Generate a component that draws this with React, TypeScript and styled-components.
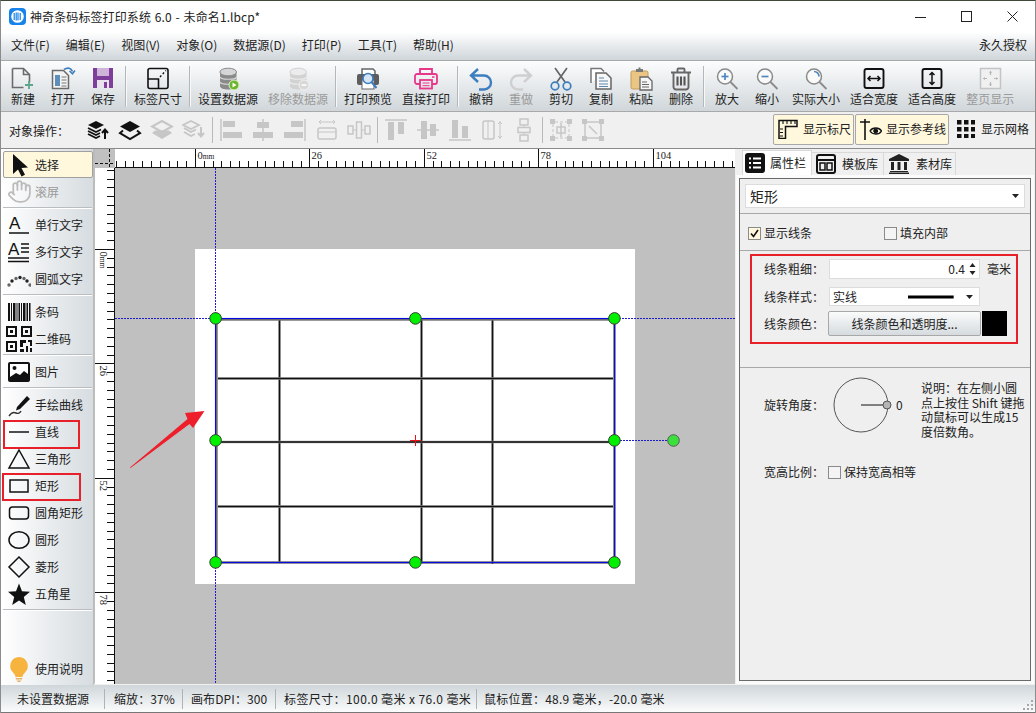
import React from "react";
import styled, { createGlobalStyle } from "styled-components";
import { Hand } from "lucide-react";

const Global = createGlobalStyle`
  html, body { margin: 0; padding: 0; background: #fff; overflow: hidden; }
  * { box-sizing: border-box; }
`;

const FONT = `"Noto Sans CJK SC", "Noto Sans", sans-serif`;
const C = "\uFF1A";
const CM = "\uFF0C";

const Window = styled.div`
  width: 1036px; height: 713px; display: flex; flex-direction: column;
  border-left: 1px solid #8c8c8c; border-right: 1px solid #8c8c8c; border-top: 1px solid #3d4a38;
  font: 12px/16px ${FONT}; color: #222; background: #f0f0f0; overflow: hidden;
`;
const TitleBar = styled.div`height: 31px; flex: none; background: #fff; display: flex; align-items: center; padding-left: 8px;`;
const TitleText = styled.span`margin-left: 4px; flex: 1; letter-spacing: 0.1px; word-spacing: 1px;`;
const WinButton = styled.div`width: 46px; height: 31px; display: flex; align-items: center; justify-content: center;`;
const MenuBar = styled.div`
  height: 29px; flex: none; display: flex; align-items: center; padding: 0 8px 2px 10px; gap: 16.1px;
  background: linear-gradient(#ffffff, #cfd5da); border-bottom: 1px solid #a9a9a9;
`;
const MenuRight = styled.span`margin-left: auto;`;
const ToolBar = styled.div`
  height: 51px; flex: none; display: flex; padding: 3px 0 0 2px;
  background: linear-gradient(#fcfdfd, #d0d6da); border-bottom: 1px solid #a9a9a9;
`;
const ToolButton = styled.div<{ $off?: boolean }>`
  min-width: 40px; padding: 0 5px; height: 46px; display: flex; flex-direction: column; align-items: center;
  color: ${(p) => (p.$off ? "#9a9a9a" : "#222")}; white-space: nowrap;
  svg { display: block; margin-top: 2px; margin-bottom: -3px; }
`;
const ToolSep = styled.div`width: 6px; height: 41px; margin-top: 2px; position: relative; flex: none;
  &::before { content: ""; position: absolute; left: 2px; top: 0; bottom: 0; width: 1px; background: #b4b8bb; }
  &::after { content: ""; position: absolute; left: 3px; top: 0; bottom: 0; width: 1px; background: #f8f8f8; }
`;
const ObjectBar = styled.div`
  height: 37px; flex: none; display: flex; align-items: center; padding: 0 5px 2px 8px;
  background: #f0f0f0; border-bottom: 1px solid #8a8a8a;
`;
const ObjectLabel = styled.span`width: 73px; flex: none; margin-top: 3px;`;
const ObjectIcon = styled.div`width: 32px; height: 26px; flex: none; display: flex; align-items: center; justify-content: center; margin-top: 1px;`;
const ObjectSep = styled.div`width: 5px; height: 26px; flex: none; position: relative; margin-top: 1px;
  &::before { content: ""; position: absolute; left: 2px; top: 0; bottom: 0; width: 1px; background: #b9b9b9; }
`;
const ShowGroup = styled.div`margin-left: auto; display: flex; align-items: center; gap: 1px;`;
const ShowButton = styled.div<{ $on?: boolean; $gap: number }>`
  height: 31px; padding: 0 ${(p) => (p.$on ? "2px" : "0")} 0 ${(p) => (p.$on ? "4px" : "6px")}; display: flex; align-items: center; gap: ${(p) => p.$gap}px; white-space: nowrap;
  background: ${(p) => (p.$on ? "#fff8dd" : "transparent")};
  border: 1px solid ${(p) => (p.$on ? "#a8a8a8" : "transparent")}; border-radius: 2px;
`;
const Main = styled.div`flex: 1; min-height: 0; display: flex;`;
const SideBar = styled.div`
  width: 94px; flex: none; display: flex; flex-direction: column; padding: 2px 0 3px;
  background: linear-gradient(90deg, #ffffff, #d6dce0); border-right: 2px solid #bcbcbc;
  border-bottom-right-radius: 3px;
`;
const SideItem = styled.div<{ $active?: boolean; $off?: boolean; $mark?: "line" | "rect" }>`
  height: 27px; flex: none; display: flex; align-items: center; gap: 3px; padding-left: 5px; position: relative;
  color: ${(p) => (p.$off ? "#9a9a9a" : "#222")}; white-space: nowrap;
  ${(p) => p.$active && `background: #fff8dd; border: 1px solid #a0a0a0; border-radius: 2px; margin: 0 0 0 2px; padding-left: 2px; width: 90px;`}
  ${(p) => p.$mark === "line" && `&::after { content: ""; position: absolute; left: 2px; top: 2px; width: 73px; height: 25px; border: 2px solid #e8202a; }`}
  ${(p) => p.$mark === "rect" && `&::after { content: ""; position: absolute; left: 1px; top: 1px; width: 75px; height: 24px; border: 2px solid #e8202a; }`}
`;
const SideIcon = styled.div`width: 26px; height: 26px; flex: none; display: flex; align-items: center; justify-content: center;`;
const SideSep = styled.div`height: 6px; flex: none; position: relative;
  &::before { content: ""; position: absolute; left: 2px; right: 1px; top: 2px; height: 1px; background: #b9bdc0; }
  &::after { content: ""; position: absolute; left: 2px; right: 1px; top: 3px; height: 1px; background: #fff; }
`;
const SideBottom = styled.div`margin-top: auto;`;
const Workspace = styled.div`
  width: 640px; flex: none; position: relative; display: grid;
  grid-template-columns: 20px 620px; grid-template-rows: 19px 516px;
`;
const RulerCorner = styled.div`background: #c0c0c0;`;
const TopRuler = styled.svg`display: block; background: #fff;`;
const LeftRuler = styled.svg`display: block; background: #fff;`;
const CanvasArea = styled.div`background: #c0c0c0; position: relative;`;
const PageSheet = styled.div`position: absolute; left: 80px; top: 81px; width: 440px; height: 335px; background: #fff;`;
const Overlay = styled.svg`position: absolute; left: 0; top: 0; pointer-events: none;`;
const RightPanel = styled.div`
  flex: 1; min-width: 0; display: flex; flex-direction: column; background: #f0f0f0; position: relative;
`;
const Tabs = styled.div`height: 26px; flex: none; display: flex; padding: 1px 0 0 7px; align-items: flex-end; position: relative; z-index: 1;`;
const Tab = styled.div<{ $active?: boolean }>`
  height: ${(p) => (p.$active ? "25px" : "23px")}; width: ${(p) => (p.$active ? "70px" : "72px")}; display: flex; align-items: center;
  gap: ${(p) => (p.$active ? "4px" : "6px")}; padding-left: 1px; white-space: nowrap;
  background: ${(p) => (p.$active ? "#fff" : "#f0f0f0")};
  border: 1px solid #d9d9d9; border-bottom: none; 
  ${(p) => !p.$active && `margin-left: -1px; padding-left: 4px; width: 73px;`}
`;
const PropBox = styled.div`
  flex: 1; margin: 3px 4px 4px; border: 1px solid #6a6a6a; background: #efefef; display: flex; flex-direction: column;
  box-shadow: 0 0 0 3px #fbfbfb;
`;
const HeadSection = styled.div`padding: 5px 5px 5px 5px; height: 35px; flex: none; border-bottom: 1px solid #a8a8a8;`;
const KindSelect = styled.div`
  height: 24px; background: #fff; border: 1px solid #dcdcdc; display: flex; align-items: center; justify-content: space-between;
  padding: 0 5px 0 4px; font-size: 14px;
`;
const CheckSection = styled.div`height: 37px; flex: none; display: flex; align-items: center; padding: 2px 0 0 8px; border-bottom: 1px solid #a8a8a8;`;
const CheckLabel = styled.label<{ $width?: number }>`display: flex; align-items: center; gap: 3px; width: ${(p) => p.$width ?? 136}px;`;
const CheckBox = styled.span<{ $on?: boolean }>`
  width: 13px; height: 13px; flex: none; border: 1px solid #8a8a8a; display: flex; align-items: center; justify-content: center;
  background: ${(p) => (p.$on ? "#fff8dd" : "#f4f4f4")};
`;
const LineSection = styled.div`height: 117px; flex: none; padding: 3px 0 0 10px; border-bottom: 1px solid #a8a8a8;`;
const RedFrame = styled.div`
  width: 268px; height: 90px; border: 2px solid #e8202a; padding: 3px 0 0 12px; display: flex; flex-direction: column;
`;
const LineRow = styled.div<{ $h: number; $mb: number }>`display: flex; align-items: center; height: ${(p) => p.$h}px; margin-bottom: ${(p) => p.$mb}px;`;
const FieldLabel = styled.span`width: 65px; flex: none; white-space: nowrap;`;
const NumberField = styled.div`
  width: 151px; height: 100%; background: #fff; border: 1px solid #dcdcdc; display: flex; align-items: center; justify-content: flex-end; gap: 4px; padding-right: 3px;
`;
const Unit = styled.span`margin-left: 7px;`;
const StyleField = styled(NumberField)`justify-content: flex-start; padding: 0 6px 0 3px; gap: 0;`;
const StyleName = styled.span`width: 76px;`;
const StyleSpacer = styled.span`width: 12px;`;
const ColorButton = styled.div`
  width: 153px; height: 100%; margin-left: -1px; display: flex; align-items: center; justify-content: center;
  background: linear-gradient(#fbfbfb, #d5dbdf); border: 1px solid #a8a8a8; border-radius: 2px;
`;
const Swatch = styled.div`width: 25px; height: 25px; margin-left: 1px; background: #000;`;
const RotateSection = styled.div`display: flex; align-items: flex-start; padding: 7px 0 0 24px;`;
const DialValue = styled.span`width: 29px; padding-left: 4px; flex: none; margin-top: 22px;`;
const RotateLabel = styled.span`width: 66px; flex: none; margin-top: 22px; white-space: nowrap;`;
const Note = styled.div`line-height: 14.6px; width: 108px; white-space: nowrap; margin-top: 6px;`;
const RatioRow = styled.div`display: flex; align-items: center; padding: 25px 0 0 24px;`;
const RatioLabel = styled.span`width: 64px; flex: none; white-space: nowrap;`;
const StatusBar = styled.div`
  height: 28px; flex: none; display: flex; align-items: center; background: linear-gradient(#cfd6da, #fbfcfc);
  border-bottom: 1px solid #777; position: relative; white-space: nowrap;
`;
const StatusCell = styled.div<{ $w: number; $pad: number; $last?: boolean; $ls?: number }>`
  width: ${(p) => p.$w}px; padding-left: ${(p) => p.$pad}px; height: 20px; line-height: 20px; flex: none;
  letter-spacing: ${(p) => p.$ls ?? 0}px;
  border-right: ${(p) => (p.$last ? "none" : "1px solid #aeb3b6")};
`;
const Grip = styled.svg`position: absolute; right: 1px; bottom: 1px;`;

type P = { c?: string };
const G = ({ children, s = 28 }: { children: React.ReactNode; s?: number }) => (
  <svg width={s} height={s} viewBox={`0 0 ${s} ${s}`} fill="none">{children}</svg>
);

const Logo = () => (
  <svg width="17" height="17" viewBox="0 0 17 17">
    <rect width="17" height="17" rx="4" fill="#1683ea" />
    <circle cx="8.5" cy="8.5" r="6.3" fill="#fff" />
    <path d="M5.2 5v7M7.2 4.5v8M9 4.5v8M11.2 5v7" stroke="#1683ea" strokeWidth="1.2" />
  </svg>
);

const INew = () => (
  <G>
    <path d="M3.5 2.5h11l6 6v8M14.5 2.5v6h6M3.5 2.5v19h11" stroke="#6b6b6b" strokeWidth="1.6" />
    <path d="M20 15v8M16 19h8" stroke="#5fa58c" strokeWidth="1.8" />
  </G>
);
const IOpen = () => (
  <G>
    <path d="M3.5 4.5h11l5 5v13h-16z" fill="#f3f3f3" stroke="#6b6b6b" strokeWidth="1.5" />
    <path d="M6 9h5v11H6z" fill="#5d8fbd" />
    <path d="M12.5 11h5M12.5 14h5M12.5 17h5M12.5 20h5" stroke="#777" />
    <path d="M15 3.5c4-2.5 7-1.500 8.500 2" stroke="#3d7ebf" strokeWidth="1.7" />
    <path d="M20.500 5l3 2.800 2.500-3.300" stroke="#3d7ebf" strokeWidth="1.500" />
  </G>
);
const ISave = () => (
  <G>
    <path d="M4 2h20v20H4z" fill="#7d3f9a" />
    <path d="M8 2h12v8H8z" fill="#cdb4d8" />
    <path d="M8 14h12v8H8z" fill="#e9e1ee" />
    <path d="M15 16h3v6h-3z" fill="#7d3f9a" />
  </G>
);
const ISize = () => (
  <G>
    <rect x="4" y="2.500" width="20" height="20" rx="2" stroke="#111" strokeWidth="1.600" />
    <path d="M4 13h10.500v9" stroke="#111" strokeWidth="1.600" />
    <path d="M16 11l6-6.500" stroke="#111" strokeWidth="1.400" strokeDasharray="2 2" />
  </G>
);
const IDb = ({ off }: { off?: boolean }) => {
  const a = off ? "#d2d2d2" : "#8a8a8a";
  const b = off ? "#ececec" : "#d6d6d6";
  return (
    <G>
      <path d="M6 6v14c0 2.500 4 3.500 8 3.500s8.500-1 8.500-3.500V6z" fill={a} />
      <ellipse cx="14.200" cy="6" rx="8.300" ry="3.800" fill={b} stroke={a} />
      <path d="M6 11c1 3 15.500 3 16.500 0M6 16c1 3 15.500 3 16.500 0" stroke={b} strokeWidth="1.200" />
      <circle cx="20" cy="19" r="5" fill={off ? "#d8d8d8" : "#6bb52f"} stroke={off ? "#f2f2f2" : "#dff0c8"} />
      {off ? <path d="M17.500 19h5" stroke="#fff" strokeWidth="1.600" /> : <path d="M18.500 16.500v5l4-2.500z" fill="#fff" />}
    </G>
  );
};
const IPreview = () => (
  <G>
    <path d="M8 8V3h11l2 2v3" fill="#fff" stroke="#666" strokeWidth="1.500" />
    <rect x="3" y="8" width="22" height="11" rx="2" fill="#5d5d5d" />
    <rect x="8" y="14" width="12" height="9" fill="#fff" stroke="#666" />
    <circle cx="14" cy="12.500" r="5" fill="#d4e6f6" stroke="#3b7bbf" strokeWidth="1.500" />
    <path d="M17.500 16l5 6" stroke="#3b7bbf" strokeWidth="2" />
  </G>
);
const IPrint = () => (
  <G>
    <path d="M8 8V3h12v5" stroke="#e8368a" strokeWidth="1.800" />
    <path d="M8 18H5a2 2 0 0 1-2-2V10a2 2 0 0 1 2-2h18a2 2 0 0 1 2 2v6a2 2 0 0 1-2 2h-3" stroke="#e8368a" strokeWidth="1.800" />
    <rect x="8" y="14" width="12" height="8.500" stroke="#e8368a" strokeWidth="1.800" />
    <path d="M10.500 17h7M10.500 19.700h7" stroke="#e8368a" />
    <path d="M20 11h2.500" stroke="#e8368a" strokeWidth="1.500" />
  </G>
);
const IUndo = ({ c = "#3d7ebf", flip }: P & { flip?: boolean }) => (
  <G>
    <g transform={flip ? "matrix(-1 0 0 1 28 0)" : undefined}>
      <path d="M11 3L4 9.500l7 6.500M4.500 9.500H17a7 7 0 0 1 0 14h-5" stroke={c} strokeWidth="2.400" />
    </g>
  </G>
);
const ICut = () => (
  <G>
    <path d="M10 16L20 2M18 16L8 2" stroke="#666" strokeWidth="1.700" />
    <circle cx="8" cy="20" r="3.800" stroke="#3d7ebf" strokeWidth="1.700" />
    <circle cx="20" cy="20" r="3.800" stroke="#3d7ebf" strokeWidth="1.700" />
  </G>
);
const ICopy = () => (
  <G>
    <path d="M4 17V2.500h10l3 3" fill="#fff" stroke="#777" strokeWidth="1.500" />
    <path d="M9 7h10l5 5v11H9z" fill="#f7f7f7" stroke="#666" strokeWidth="1.500" />
    <path d="M12 12h5M12 15h9M12 18h9M12 20.500h9" stroke="#5a86ad" />
  </G>
);
const IPaste = () => (
  <G>
    <rect x="4" y="5" width="17" height="18" rx="1.500" fill="#eac583" stroke="#c59b5a" />
    <path d="M9 6V3h2.500V1.500h2V3H16v3z" fill="#777" />
    <path d="M13 11h8l4 4v9H13z" fill="#f6f6f6" stroke="#666" strokeWidth="1.300" />
    <path d="M15 16h5M15 18.500h7M15 21h7" stroke="#666" />
  </G>
);
const ITrash = () => (
  <G>
    <path d="M4 6.500h20M10.500 6V3.500a1 1 0 0 1 1-1h5a1 1 0 0 1 1 1V6" stroke="#666" strokeWidth="1.900" />
    <path d="M6.500 7v14a2.500 2.500 0 0 0 2.500 2.500h10a2.500 2.500 0 0 0 2.500-2.500V7" stroke="#666" strokeWidth="1.900" />
    <path d="M10.500 10.500v9M14 10.500v9M17.500 10.500v9" stroke="#555" strokeWidth="2.100" />
  </G>
);
const IZoom = ({ kind }: { kind: "in" | "out" | "fit" }) => (
  <G>
    <circle cx="12" cy="10.500" r="7.500" fill="#fafafa" stroke="#8a8a8a" strokeWidth="1.500" />
    <path d="M17.500 16l7 7" stroke="#8a8a8a" strokeWidth="1.800" />
    {kind !== "fit" && <path d="M8.500 10.500h7" stroke="#4f87bc" strokeWidth="1.700" />}
    {kind === "in" && <path d="M12 7v7" stroke="#4f87bc" strokeWidth="1.700" />}
    {kind === "fit" && <path d="M12 5.500a5 5 0 0 1 5 5" stroke="#4f87bc" strokeWidth="1.700" />}
  </G>
);
const IFit = ({ v }: { v?: boolean }) => (
  <G>
    <rect x="4.500" y="3" width="19" height="19" rx="2" stroke="#111" strokeWidth="1.900" />
    <g transform={v ? "rotate(90 14 12.500)" : undefined}>
      <path d="M8 12.500h12M10.500 10L8 12.500l2.500 2.500M17.500 10l2.500 2.500-2.500 2.500" stroke="#111" strokeWidth="1.500" />
    </g>
  </G>
);
const IFull = () => (
  <G>
    <rect x="4.500" y="2.500" width="20" height="20" fill="#f0f0f0" stroke="#c4c4c4" strokeWidth="1.500" />
    <path d="M14.500 5v4M14.500 16v4M7 12.500h4M18 12.500h4" stroke="#b6b6b6" strokeWidth="1.200" />
    <path d="M13 7l1.500-2 1.500 2M13 18l1.500 2 1.500-2M9 11l-2 1.500 2 1.500M20 11l2 1.500-2 1.500" fill="#b6b6b6" />
  </G>
);

const Off = "#c6c6c6";
const OLayer = ({ kind }: { kind: number }) => (
  <G s={24}>
    {kind === 0 && (
      <>
        <path d="M10 3l8 4-8 4-8-4z" fill="#111" />
        <path d="M2 10l8 4 5-2.500M2 13l8 4 4-2M2 16l8 4 4-2" stroke="#111" strokeWidth="1.700" />
        <path d="M19 21v-9M16 15l3-3.500 3 3.500" stroke="#111" strokeWidth="2" />
      </>
    )}
    {kind === 1 && (
      <>
        <path d="M12 3l10 5.500-10 5.500L2 8.500z" fill="#111" />
        <path d="M5 12.500l-3 2.500 10 6 10-6-3-2.500" stroke="#111" strokeWidth="2" />
      </>
    )}
    {kind === 2 && (
      <>
        <path d="M12 3l10 5.500-10 5.500L2 8.500z" stroke={Off} strokeWidth="2" />
        <path d="M5 12.500l-3 2.500 10 6 10-6-3-2.500" fill={Off} />
      </>
    )}
    {kind === 3 && (
      <>
        <path d="M9 3l8 4-8 4-8-4z" stroke={Off} strokeWidth="1.800" />
        <path d="M2 10l7 4 5-2.500M2 14l7 4 4-2" stroke={Off} strokeWidth="1.800" />
        <path d="M19 9v9M16 15l3 3.500 3-3.500" stroke={Off} strokeWidth="2" />
      </>
    )}
  </G>
);
const OAlign = ({ kind }: { kind: number }) => {
  const bar = (x: number, y: number, w: number, h: number) => <rect x={x} y={y} width={w} height={h} fill={Off} />;
  return (
    <G s={24}>
      {kind === 0 && <><path d="M2 1v22" stroke={Off} strokeWidth="1.500" />{bar(4, 3, 12, 6)}{bar(4, 14, 19, 6)}</>}
      {kind === 1 && <><path d="M12 1v22" stroke={Off} strokeWidth="1.500" />{bar(6, 4, 12, 6)}{bar(2, 14, 20, 6)}</>}
      {kind === 2 && <><path d="M22 1v22" stroke={Off} strokeWidth="1.500" />{bar(8, 3, 12, 6)}{bar(1, 14, 19, 6)}</>}
      {kind === 3 && <><path d="M4 4h16M6 2L4 4l2 2M18 2l2 2-2 2" stroke={Off} /><rect x="3" y="10" width="18" height="11" rx="2" stroke={Off} strokeWidth="1.500" /><path d="M3 14h18" stroke={Off} /></>}
      {kind === 4 && <><rect x="1" y="8" width="5" height="8" stroke={Off} strokeWidth="1.500" /><rect x="9.500" y="4" width="5" height="16" stroke={Off} strokeWidth="1.500" /><rect x="18" y="8" width="5" height="8" stroke={Off} strokeWidth="1.500" /><path d="M6 12h3.500M14.500 12H18" stroke={Off} /></>}
      {kind === 5 && <><path d="M1 2h22" stroke={Off} strokeWidth="1.500" />{bar(4, 4, 6, 18)}{bar(14, 4, 6, 12)}</>}
      {kind === 6 && <><path d="M1 12h22" stroke={Off} strokeWidth="1.500" />{bar(5, 3, 6, 18)}{bar(14, 6, 6, 12)}</>}
      {kind === 7 && <><path d="M1 22h22" stroke={Off} strokeWidth="1.500" />{bar(4, 2, 6, 18)}{bar(14, 8, 6, 12)}</>}
      {kind === 8 && <><rect x="3" y="3" width="11" height="18" rx="2" stroke={Off} strokeWidth="1.500" /><path d="M8 3v18M20 3v18M18 6l2-2 2 2M18 18l2 2 2-2" stroke={Off} /></>}
      {kind === 9 && <><rect x="8" y="1" width="8" height="6" stroke={Off} strokeWidth="1.500" /><rect x="6" y="9.500" width="12" height="5" stroke={Off} strokeWidth="1.500" /><rect x="8" y="17" width="8" height="6" stroke={Off} strokeWidth="1.500" /><path d="M12 7v2.500M12 14.500V17" stroke={Off} /></>}
      {kind === 10 && <><path d="M6 4h12M6 20h12M4 6v12M20 6v12" stroke={Off} strokeDasharray="3 2" /><path d="M8 9h8v6H8z M12 5v14" stroke={Off} strokeWidth="1.500" />{bar(1, 1, 5, 5)}{bar(18, 1, 5, 5)}{bar(1, 18, 5, 5)}{bar(18, 18, 5, 5)}</>}
      {kind === 11 && <><path d="M6 4h12M6 20h12M4 6v12M20 6v12M8 8l8 8" stroke={Off} strokeWidth="1.500" />{bar(1, 1, 5, 5)}{bar(18, 1, 5, 5)}{bar(1, 18, 5, 5)}{bar(18, 18, 5, 5)}</>}
    </G>
  );
};
const IRuler = () => (
  <svg width="20" height="20" viewBox="0 0 20 20" fill="none" stroke="#111" strokeWidth="1.500">
    <path d="M1 1.500h18v6H7.500v12H1z" />
    <path d="M5 2v3M9 2v3M13 2v3M17 2v3M2 10h3M2 13.500h3M2 17h3" strokeWidth="1.100" />
  </svg>
);
const IGuide = () => (
  <svg width="22" height="22" viewBox="0 0 22 22" fill="none" stroke="#111">
    <path d="M0 4h10M5 1v21" strokeWidth="1.600" />
    <path d="M10 13c2.500-4 9-4 11.500 0-2.500 4-9 4-11.500 0z" strokeWidth="1.300" />
    <circle cx="15.700" cy="13" r="2" fill="#111" />
  </svg>
);
const IGrid = () => (
  <svg width="18" height="18" viewBox="0 0 18 18" fill="#111">
    {[0, 7, 14].flatMap((x) => [0, 7, 14].map((y) => <rect key={`${x}-${y}`} x={x} y={y} width="4.500" height="4.500" />))}
  </svg>
);
const GlyphA = styled.text`font: 17px "Liberation Sans", sans-serif; fill: #111;`;
const S: Record<string, React.ReactNode> = {
  select: <G s={24}><path d="M6 1v20l5-4.500 3.500 7 3.500-1.800-3.500-6.700 6.500-.5z" fill="#111" /></G>,
  hand: <Hand size={25} color="#bcbcbc" strokeWidth={1.700} />,
  single: <G s={24}><GlyphA x="2" y="16">A</GlyphA><path d="M2 20h20" stroke="#111" strokeWidth="1.500" /></G>,
  multi: <G s={24}><GlyphA x="1" y="15" >A</GlyphA><path d="M14 4h8M14 8h8M14 12h8M1 18h21M1 21.500h21" stroke="#111" strokeWidth="1.300" /></G>,
  arc: <G s={24}>{[[2, 18], [5, 14], [9, 11.500], [13, 10.500], [17, 11.500], [20, 14], [23, 18]].map(([x, y], i) => <circle key={i} cx={x} cy={y} r="1.700" fill={i % 2 ? "#222" : "#666"} />)}</G>,
  barcode: <G s={26}>{[[2, 2], [5, 1], [7, 2.500], [10.500, 1], [12.500, 1.500], [15, 1], [17, 2.500], [20.500, 1.500], [23, 1.500]].map(([x, w], i) => <rect key={i} x={x} y="4" width={w} height="18" fill="#111" />)}</G>,
  qr: (
    <G s={26}>
      <path fillRule="evenodd" d="M0 0h11v11H0zM2 2v7h7V2zM15 0h11v11H15zM17 2v7h7V2zM0 15h11v11H0zM2 17v7h7v-7z" fill="#111" />
      <path d="M4 4h3v3H4zM19 4h3v3h-3zM4 19h3v3H4zM14 14h6v3h-3v4h-3zM22 14h4v6h-2v-4h-2zM14 23h4v3h-4zM20 20h2v6h-2zM24 22h2v4h-2z" fill="#111" />
    </G>
  ),
  image: (
    <G s={24}>
      <rect x="1" y="2" width="22" height="20" rx="2" fill="#111" />
      <rect x="3" y="4" width="18" height="13" fill="#fff" />
      <circle cx="7.500" cy="8" r="2" fill="#111" />
      <path d="M3 17l6-4 4 2 4-4 4 3v3z" fill="#111" />
    </G>
  ),
  pen: (
    <G s={24}>
      <path d="M10 14L20 3l3 3-10 10-4 1.500z" fill="#111" />
      <path d="M2 23c2-3 5-4 7-3s4 0 5-2" stroke="#333" strokeWidth="1.400" />
    </G>
  ),
  line: <G s={24}><path d="M2 12h20" stroke="#222" strokeWidth="1.600" /></G>,
  triangle: <G s={24}><path d="M12 3l10 18H2z" stroke="#111" strokeWidth="1.500" /></G>,
  rect: <G s={24}><rect x="3" y="6" width="18" height="12" stroke="#111" strokeWidth="1.500" /></G>,
  round: <G s={24}><rect x="2.500" y="6" width="19" height="12" rx="3" stroke="#111" strokeWidth="1.500" /></G>,
  ellipse: <G s={24}><ellipse cx="12" cy="12" rx="10" ry="8.300" stroke="#111" strokeWidth="1.500" /></G>,
  diamond: <G s={24}><path d="M12 2l10 10-10 10L2 12z" stroke="#111" strokeWidth="1.500" /></G>,
  star: <G s={24}><path d="M12 1.500l3 7.700 8 .5-6.200 5.200 2 8L12 18.500 5.200 23l2-8L1 9.700l8-.5z" fill="#111" /></G>,
  bulb: (
    <G s={26}>
      <path d="M13 1a9 9 0 0 0-6 15.500c1.500 1.500 2.500 3 2.500 4.500h7c0-1.500 1-3 2.500-4.500A9 9 0 0 0 13 1z" fill="#f6b33e" />
      <path d="M9.500 22h7l-.5 1.500h-6zM10.500 24.500h5L14 26h-2z" fill="#e3b060" />
    </G>
  ),
};

type Tool = { label?: string; icon?: React.ReactNode; off?: boolean };
const tools: Tool[] = [
  { label: "新建", icon: <INew /> }, { label: "打开", icon: <IOpen /> }, { label: "保存", icon: <ISave /> }, {},
  { label: "标签尺寸", icon: <ISize /> }, {},
  { label: "设置数据源", icon: <IDb /> }, { label: "移除数据源", icon: <IDb off />, off: true }, {},
  { label: "打印预览", icon: <IPreview /> }, { label: "直接打印", icon: <IPrint /> }, {},
  { label: "撤销", icon: <IUndo /> }, { label: "重做", icon: <IUndo c="#cfcfcf" flip />, off: true },
  { label: "剪切", icon: <ICut /> }, { label: "复制", icon: <ICopy /> }, { label: "粘贴", icon: <IPaste /> }, { label: "删除", icon: <ITrash /> }, {},
  { label: "放大", icon: <IZoom kind="in" /> }, { label: "缩小", icon: <IZoom kind="out" /> }, { label: "实际大小", icon: <IZoom kind="fit" /> },
  { label: "适合宽度", icon: <IFit /> }, { label: "适合高度", icon: <IFit v /> }, { label: "整页显示", icon: <IFull />, off: true },
];
const menus = ["文件(F)", "编辑(E)", "视图(V)", "对象(O)", "数据源(D)", "打印(P)", "工具(T)", "帮助(H)"];
type Side = { k?: string; label?: string; active?: boolean; off?: boolean; mark?: "line" | "rect" };
const sideItems: Side[] = [
  { k: "select", label: "选择", active: true }, { k: "hand", label: "滚屏", off: true }, {},
  { k: "single", label: "单行文字" }, { k: "multi", label: "多行文字" }, { k: "arc", label: "圆弧文字" }, {},
  { k: "barcode", label: "条码" }, { k: "qr", label: "二维码" }, {},
  { k: "image", label: "图片" }, {},
  { k: "pen", label: "手绘曲线" }, { k: "line", label: "直线", mark: "line" }, { k: "triangle", label: "三角形" }, { k: "rect", label: "矩形", mark: "rect" },
  { k: "round", label: "圆角矩形" }, { k: "ellipse", label: "圆形" }, { k: "diamond", label: "菱形" }, { k: "star", label: "五角星" }, {},
];

const MM = 8.8;
const RulerHoriz = () => {
  const ticks: React.ReactNode[] = [];
  for (let i = -9; i <= 61; i++) {
    const x = Math.round(80 + i * MM) + 0.5;
    const major = i % 13 === 0 && i >= 0;
    ticks.push(<line key={i} x1={x} x2={x} y1={major ? 0 : 12} y2={19} stroke="#111" />);
    if (major) {
      ticks.push(
        <text key={`t${i}`} x={x + 2} y={10} fontFamily="Liberation Serif, serif" fontSize="10.500" fill="#222">
          {i * 2}
          {i === 0 && <tspan fontSize="7.500">mm</tspan>}
        </text>
      );
    }
  }
  return (
    <TopRuler width="620" height="19" viewBox="0 0 620 19">
      {ticks}
      <line x1="0" x2="620" y1="18.500" y2="18.500" stroke="#111" />
    </TopRuler>
  );
};
const RulerVert = () => {
  const ticks: React.ReactNode[] = [];
  for (let i = -9; i <= 50; i++) {
    const y = Math.round(81 + i * MM) + 0.5;
    const major = i % 13 === 0 && i >= 0;
    ticks.push(<line key={i} y1={y} y2={y} x1={major ? 0 : 12} x2={20} stroke="#111" />);
    if (major) {
      ticks.push(
        <text key={`t${i}`} transform={`translate(5 ${y + 2}) rotate(90)`} fontFamily="Liberation Serif, serif" fontSize="10.500" fill="#222">
          {i * 2}
          {i === 0 && <tspan fontSize="7.500">mm</tspan>}
        </text>
      );
    }
  }
  return (
    <LeftRuler width="20" height="516" viewBox="0 0 20 516">
      {ticks}
      <line x1="19.500" x2="19.500" y1="0" y2="516" stroke="#111" />
    </LeftRuler>
  );
};

const handles = [[215.6, 318.4], [415.4, 318.4], [614.4, 318.4], [215.6, 440.4], [614.4, 440.4], [215.6, 562.4], [415.4, 562.4], [614.4, 562.4]];
const gridLine = (key: string, x1: number, y1: number, x2: number, y2: number) => (
  <g key={key}>
    <line x1={x1} y1={y1} x2={x2} y2={y2} stroke="#a0a0a0" strokeWidth="2.600" />
    <line x1={x1} y1={y1} x2={x2} y2={y2} stroke="#111" strokeWidth="1.400" />
  </g>
);
const Shapes = () => (
  <Overlay width="640" height="535" viewBox="95 149 640 535" fill="none">
    <path d="M95 163.500h20M109.500 149v19" stroke="#111" strokeDasharray="3 2" />
    <line x1="215.500" y1="168" x2="215.500" y2="684" stroke="#1c1cd0" strokeDasharray="2 1" />
    <line x1="115" y1="318.500" x2="735" y2="318.500" stroke="#1c1cd0" strokeDasharray="2 1" />
    <line x1="614" y1="440.500" x2="673" y2="440.500" stroke="#1c1cd0" strokeDasharray="2 1" />
    {gridLine("v1", 279.500, 320, 279.500, 562)}
    {gridLine("v2", 421.500, 320, 421.500, 562)}
    {gridLine("v3", 492.500, 320, 492.500, 564)}
    {gridLine("h1", 218, 378.500, 613, 378.500)}
    {gridLine("h2", 218, 442, 613, 442)}
    {gridLine("h3", 218, 506.500, 613, 506.500)}
    <rect x="216.500" y="319.500" width="398" height="243" stroke="#6e6e6e" strokeWidth="2.400" />
    <rect x="215.500" y="318.500" width="399" height="244" stroke="#0808e0" strokeWidth="1.100" />
    <path d="M410 440.500h11M415.500 435v11" stroke="#ee1111" />
    <path d="M130 467.500L187.500 419 185 413l19.500-2L193 428l-3.500-4L130.500 468z" fill="#ee1f2a" />
    {handles.map(([x, y]) => <circle key={`${x}-${y}`} cx={x} cy={y} r="5.800" fill="#00f000" stroke="#3a3a3a" />)}
    <circle cx="673.500" cy="440.500" r="5.800" fill="#3ce03c" stroke="#5a5a5a" />
  </Overlay>
);

const SmallCaret = () => (
  <svg width="7" height="4" viewBox="0 0 7 4"><path d="M0 0h7L3.500 4z" fill="#222" /></svg>
);

export default function App() {
  return (
    <Window>
      <Global />
      <TitleBar>
        <Logo />
        <TitleText>神奇条码标签打印系统 6.0 - 未命名1.lbcp*</TitleText>
        <WinButton><svg width="11" height="11" fill="none"><path d="M0 6.500h11" stroke="#222" /></svg></WinButton>
        <WinButton><svg width="11" height="11" fill="none"><rect x=".5" y=".5" width="10" height="10" stroke="#222" /></svg></WinButton>
        <WinButton><svg width="11" height="11" fill="none"><path d="M.5.5l10 10M10.500.5l-10 10" stroke="#222" /></svg></WinButton>
      </TitleBar>
      <MenuBar>
        {menus.map((m) => <span key={m}>{m}</span>)}
        <MenuRight>永久授权</MenuRight>
      </MenuBar>
      <ToolBar>
        {tools.map((t, i) =>
          t.label ? (
            <ToolButton key={t.label} $off={t.off}>{t.icon}<span>{t.label}</span></ToolButton>
          ) : (
            <ToolSep key={i} />
          )
        )}
      </ToolBar>
      <ObjectBar>
        <ObjectLabel>对象操作{C}</ObjectLabel>
        {[0, 1, 2, 3].map((k) => <ObjectIcon key={k}><OLayer kind={k} /></ObjectIcon>)}
        <ObjectSep />
        {[0, 1, 2, 3, 4].map((k) => <ObjectIcon key={k}><OAlign kind={k} /></ObjectIcon>)}
        <ObjectSep />
        {[5, 6, 7, 8, 9].map((k) => <ObjectIcon key={k}><OAlign kind={k} /></ObjectIcon>)}
        <ObjectSep />
        {[10, 11].map((k) => <ObjectIcon key={k}><OAlign kind={k} /></ObjectIcon>)}
        <ShowGroup>
          <ShowButton $on $gap={5}><IRuler />显示标尺</ShowButton>
          <ShowButton $on $gap={4}><IGuide />显示参考线</ShowButton>
          <ShowButton $gap={6}><IGrid />显示网格</ShowButton>
        </ShowGroup>
      </ObjectBar>
      <Main>
        <SideBar>
          {sideItems.map((s, i) =>
            s.k ? (
              <SideItem key={s.k} $active={s.active} $off={s.off} $mark={s.mark}>
                <SideIcon>{S[s.k]}</SideIcon>
                <span>{s.label}</span>
              </SideItem>
            ) : (
              <SideSep key={i} />
            )
          )}
          <SideBottom>
            <SideItem>
              <SideIcon>{S.bulb}</SideIcon>
              <span>使用说明</span>
            </SideItem>
          </SideBottom>
        </SideBar>
        <Workspace>
          <RulerCorner />
          <RulerHoriz />
          <RulerVert />
          <CanvasArea><PageSheet /></CanvasArea>
          <Shapes />
        </Workspace>
        <RightPanel>
          <Tabs>
            <Tab $active>
              <svg width="22" height="22" viewBox="0 0 22 22"><rect x="1" y="1" width="20" height="20" rx="3" fill="#111" /><path d="M5 6.500h2M9 6.500h8M5 11h2M9 11h8M5 15.500h2M9 15.500h8" stroke="#fff" strokeWidth="1.800" /></svg>
              属性栏
            </Tab>
            <Tab>
              <svg width="20" height="20" viewBox="0 0 20 20" fill="none" stroke="#111"><rect x="1" y="1" width="18" height="18" rx="2" strokeWidth="2" /><path d="M1 6h18" strokeWidth="2" /><rect x="4" y="9" width="5" height="7" strokeWidth="1.500" /><rect x="11" y="9" width="5" height="7" strokeWidth="1.500" /></svg>
              模板库
            </Tab>
            <Tab>
              <svg width="22" height="20" viewBox="0 0 22 20" fill="#222"><path d="M11 0l10 5v2H1V5z" /><path d="M3 8h3v8H3zM9.500 8h3v8h-3zM16 8h3v8h-3zM2 17h18v1H2zM1 18.500h20V20H1z" /></svg>
              素材库
            </Tab>
          </Tabs>
          <PropBox>
            <HeadSection>
              <KindSelect>矩形<SmallCaret /></KindSelect>
            </HeadSection>
            <CheckSection>
              <CheckLabel>
                <CheckBox $on><svg width="9" height="9" fill="none"><path d="M1 4.500l2.500 3L8 1" stroke="#111" strokeWidth="1.600" /></svg></CheckBox>
                显示线条
              </CheckLabel>
              <CheckLabel $width={100}><CheckBox />填充内部</CheckLabel>
            </CheckSection>
            <LineSection>
              <RedFrame>
                <LineRow $h={20} $mb={8}>
                  <FieldLabel>线条粗细{C}</FieldLabel>
                  <NumberField>
                    0.4
                    <svg width="7" height="14" viewBox="0 0 7 14"><path d="M3.500 1L6.500 5h-6zM3.500 13L.5 9h6z" fill="#222" /></svg>
                  </NumberField>
                  <Unit>毫米</Unit>
                </LineRow>
                <LineRow $h={19} $mb={5}>
                  <FieldLabel>线条样式{C}</FieldLabel>
                  <StyleField>
                    <StyleName>实线</StyleName>
                    <svg width="46" height="4" viewBox="0 0 46 4"><path d="M0 2h46" stroke="#000" strokeWidth="3" /></svg>
                    <StyleSpacer />
                    <SmallCaret />
                  </StyleField>
                </LineRow>
                <LineRow $h={25} $mb={0}>
                  <FieldLabel>线条颜色{C}</FieldLabel>
                  <ColorButton>线条颜色和透明度...</ColorButton>
                  <Swatch />
                </LineRow>
              </RedFrame>
            </LineSection>
            <RotateSection>
              <RotateLabel>旋转角度{C}</RotateLabel>
              <svg width="62" height="60" viewBox="0 0 62 60" fill="none">
                <circle cx="31" cy="30" r="27" stroke="#555" />
                <path d="M31 30h22" stroke="#111" />
                <circle cx="57" cy="30" r="4" fill="#b5b5b5" stroke="#555" />
              </svg>
              <DialValue>0</DialValue>
              <Note>
                说明{C}在左侧小圆<br />
                点上按住 Shift 键拖<br />
                动鼠标可以生成15<br />
                度倍数角。
              </Note>
            </RotateSection>
            <RatioRow>
              <RatioLabel>宽高比例{C}</RatioLabel>
              <CheckLabel><CheckBox />保持宽高相等</CheckLabel>
            </RatioRow>
          </PropBox>
        </RightPanel>
      </Main>
      <StatusBar>
        <StatusCell $w={104} $pad={16}>未设置数据源</StatusCell>
        <StatusCell $w={78} $pad={9} $ls={0.1}>缩放{C}37%</StatusCell>
        <StatusCell $w={93} $pad={8} $ls={0.1}>画布DPI{C}300</StatusCell>
        <StatusCell $w={201} $pad={8} $ls={0.4}>标签尺寸{C}100.0 毫米 x 76.0 毫米</StatusCell>
        <StatusCell $w={220} $pad={7} $last $ls={0.22}>鼠标位置{C}48.9 毫米{CM}-20.0 毫米</StatusCell>
        <Grip width="11" height="11" viewBox="0 0 11 11" fill="#a8a8a8">
          <path d="M8 0h2v2H8zM4 4h2v2H4zM8 4h2v2H8zM0 8h2v2H0zM4 8h2v2H4zM8 8h2v2H8z" />
        </Grip>
      </StatusBar>
    </Window>
  );
}
